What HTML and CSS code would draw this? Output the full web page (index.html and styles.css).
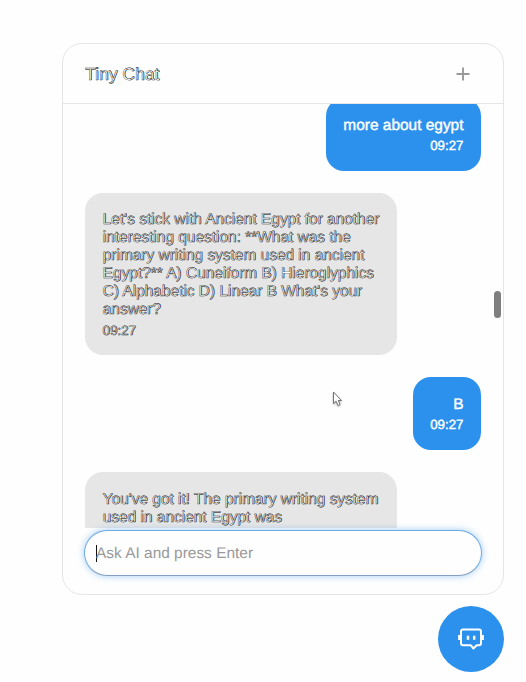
FILE: index.html
```html
<!DOCTYPE html>
<html lang="en">
<head>
<meta charset="utf-8">
<title>Tiny Chat</title>
<link rel="stylesheet" href="styles.css">
</head>
<body>
<main class="chat">
  <header class="header">
    <h1 class="title etched">Tiny Chat</h1>
    <svg class="plus" width="14" height="14" viewBox="0 0 14 14"><path d="M7 .5v13M.5 7h13" stroke="#999" stroke-width="1.9"/></svg>
  </header>
  <section class="messages">
    <div class="bubble user">more about egypt<time>09:27</time></div>
    <div class="bubble bot etched">Let's stick with Ancient Egypt for another<br>interesting question: **What was the<br>primary writing system used in ancient<br>Egypt?** A) Cuneiform B) Hieroglyphics<br>C) Alphabetic D) Linear B What's your<br>answer?<time>09:27</time></div>
    <div class="bubble user">B<time>09:27</time></div>
    <div class="bubble bot partial etched">You've got it! The primary writing system<br>used in ancient Egypt was</div>
    <span class="scrollbar"></span>
  </section>
  <div class="composer"><span class="caret"></span><span class="placeholder">Ask AI and press Enter</span></div>
</main>
<button class="launcher" aria-label="Chat">
  <svg width="28" height="24" viewBox="0 0 28 24" fill="none" stroke="#fff" stroke-width="2" stroke-linejoin="round">
    <path d="M6 2.500h16q2 0 2 2v11.700q0 2-2 2h-2.300L16.400 21.500l-2.700-3.300H6q-2 0-2-2V4.500q0-2 2-2z"/>
    <path d="M2.300 8v5M25.700 8v5" stroke-width="2.400"/>
    <path d="M11 8.800v4M17.200 8.800v4" stroke-width="2.500"/>
  </svg>
</button>
<svg class="cursor" width="12" height="17" viewBox="0 0 12 17"><path d="M1.500 1v11.500l2.600-2.300 2 4.300 2-.9-1.900-4.100h3.300z" fill="#fff" stroke="#555" stroke-width=".8"/></svg>
</body>
</html>
```
FILE: styles.css
```css
* { box-sizing: border-box; }
body {
  margin: 0;
  height: 682px;
  padding: 43px 22px 10px 62px;
  display: flex;
  flex-direction: column;
  align-items: flex-end;
  gap: 11px;
  overflow: hidden;
  background: #fefefe;
  font: 15.45px/18px "Liberation Sans", Arial, sans-serif;
  text-rendering: geometricPrecision;
}
.chat {
  width: 442px;
  height: 552px;
  border: 1px solid #e5e5e5;
  border-radius: 20px;
  display: flex;
  flex-direction: column;
}
.header {
  height: 60px;
  flex: none;
  padding: 0 33px 0 22px;
  display: flex;
  align-items: center;
  justify-content: space-between;
  border-bottom: 1px solid #e5e5e5;
}
.title { margin: 0; font-size: 17.5px; font-weight: 400; }
.plus { display: block; }
.etched {
  color: #fff;
  -webkit-text-stroke: .4px #222;
  text-shadow: .5px 0 0 #111;
}
.messages {
  position: relative;
  height: 424px;
  overflow: hidden;
  padding: 0 22px;
  display: flex;
  flex-direction: column;
  justify-content: flex-start;
  gap: 22px;
}
.bubble {
  flex: none;
  padding: 17px 17.5px;
  border-radius: 18px;
  white-space: nowrap;
}
.bubble time {
  display: block;
  margin-top: 4px;
  font-size: 13.3px;
  line-height: 15px;
}
.user {
  align-self: flex-end;
  height: 73px;
  padding-top: 19px;
  background: #2b91ed;
  color: #fff;
  text-align: right;
  -webkit-text-stroke: .4px #fff;
}
.user time { margin-top: 3px; }
.user:first-child { margin-top: -6px; }
.bot {
  align-self: flex-start;
  width: 312px;
  height: 162px;
  padding-top: 18px;
  background: #e6e6e6;
}
.partial { padding-top: 19px; }
.scrollbar {
  position: absolute;
  right: 2px;
  top: 187px;
  width: 7px;
  height: 27px;
  border-radius: 4px;
  background: #7f7f7f;
}
.composer {
  position: relative;
  flex: none;
  height: 46px;
  margin: 2px 21px 0;
  padding-left: 11px;
  display: flex;
  align-items: center;
  background: #fefefe;
  border: 1px solid #6faae2;
  border-bottom-color: #849fc3;
  border-radius: 23px;
  box-shadow: 0 0 7px rgba(43, 145, 237, .45);
  color: #999;
}
.placeholder { padding-top: 2px; margin-left: -1px; }
.caret { width: 1px; height: 17px; background: #111; }
.launcher {
  width: 66px;
  height: 66px;
  padding: 0;
  border: 0;
  border-radius: 50%;
  background: #2b91ed;
  display: flex;
  align-items: center;
  justify-content: center;
}
.cursor {
  position: absolute;
  left: 332px;
  top: 391px;
  filter: drop-shadow(0 1px 1px rgba(0, 0, 0, .3));
}
```
